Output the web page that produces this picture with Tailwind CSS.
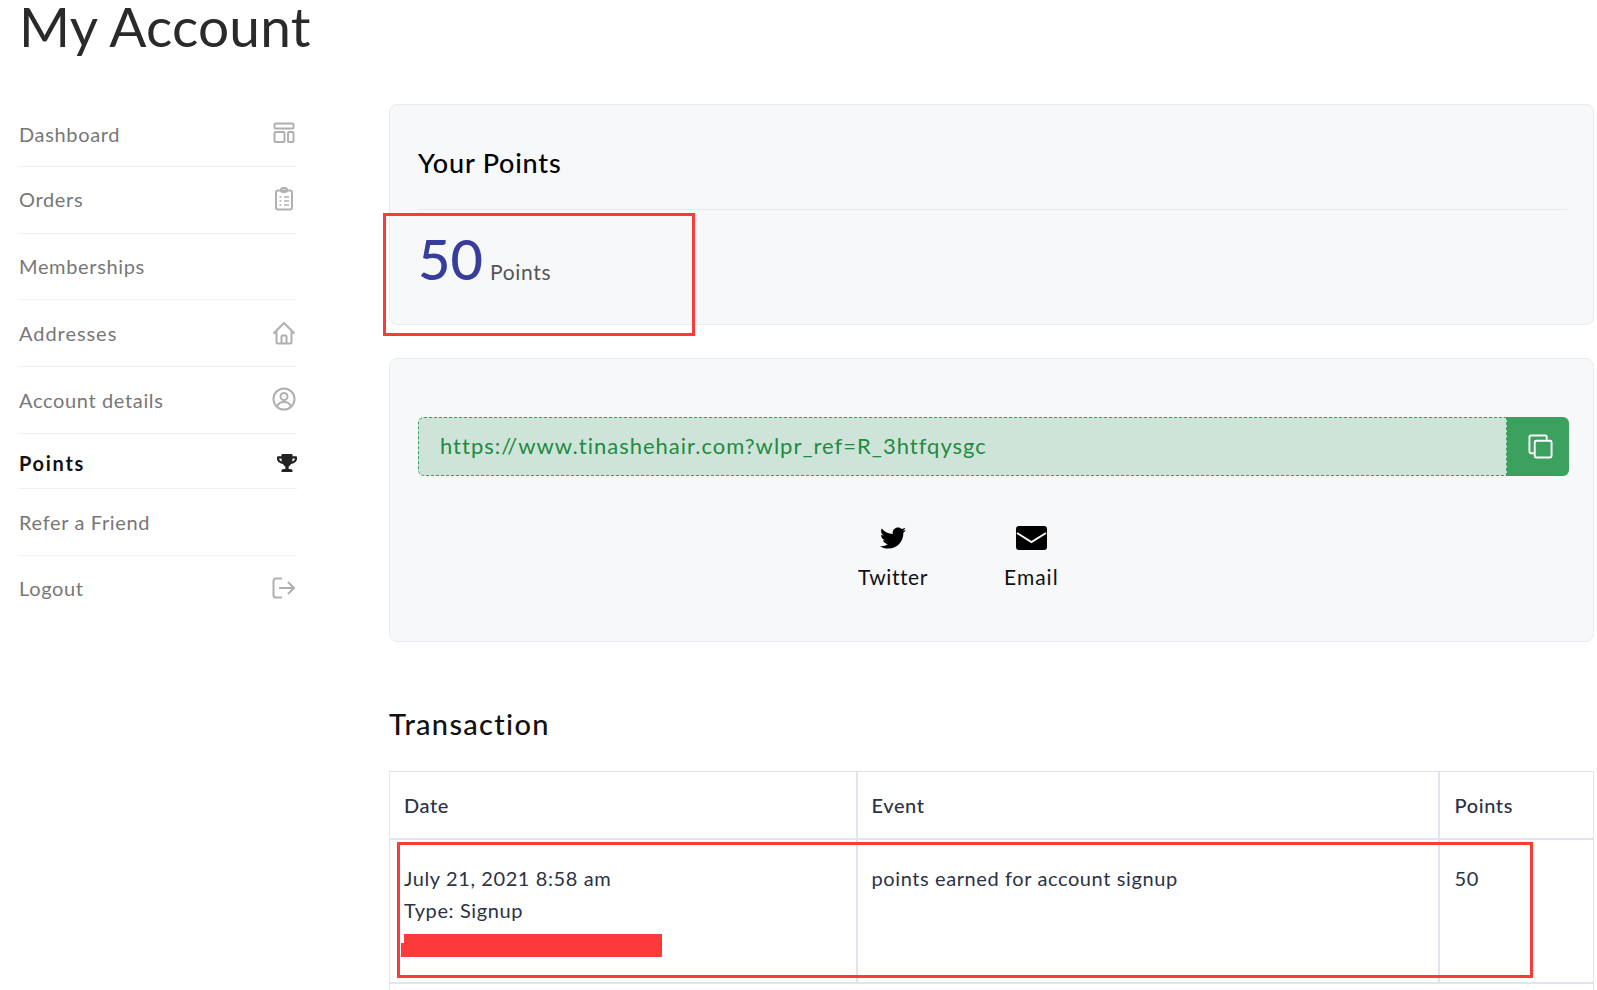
<!DOCTYPE html>
<html lang="en">
<head>
    <meta charset="UTF-8">
    <title>My Account</title>
    <script src="https://cdn.jsdelivr.net/npm/@tailwindcss/browser@4"></script>
</head>
<body class="relative h-[990px] overflow-hidden bg-white font-['Lato','Liberation_Sans',sans-serif] text-[#212121]">
    <h1 class="h-[57px] pl-[19px] text-[55px] leading-[52px] font-normal tracking-[0.2px] text-[#2a2a2a]">My Account</h1>

    <div class="flex pt-[47px] pl-[19px]">
        <!-- sidebar -->
        <nav class="w-[278px] text-[20px] tracking-[0.65px] text-[#777]">
            <a class="flex h-[63px] items-center justify-between border-b border-[#eef0f4] pb-[3px]">
                <span>Dashboard</span>
                <svg class="mr-[2px] mb-[2px] h-[22px] w-[22px]" viewBox="0 0 22 22" fill="none" stroke="#b0b0b0" stroke-width="2"><rect x="1.500" y="1.500" width="19" height="5" rx="1"/><rect x="1.500" y="10" width="10" height="10" rx="1"/><rect x="15" y="10" width="5.500" height="10" rx="1"/></svg>
            </a>
            <a class="flex h-[67px] items-center justify-between border-b border-[#eef0f4] pb-[2px]">
                <span>Orders</span>
                <svg class="mr-[3px] h-[24px] w-[20px]" viewBox="0 0 20 24" fill="none" stroke="#b0b0b0" stroke-width="2"><rect x="2" y="3.500" width="16" height="19" rx="2"/><rect x="7" y="1" width="6" height="4" rx="2"/><path d="M5.500 10h2M10 10h5M5.500 14h2M10 14h5M5.500 18h2M10 18h5" stroke-width="1.500"/></svg>
            </a>
            <a class="flex h-[66px] items-center border-b border-[#eef0f4] pb-[2px]">Memberships</a>
            <a class="flex h-[67px] items-center justify-between border-b border-[#eef0f4]">
                <span class="tracking-[0.95px]">Addresses</span>
                <svg class="mr-[1px] h-[24px] w-[24px]" viewBox="0 0 24 24" fill="none" stroke="#b0b0b0" stroke-width="2"><path d="M1.500 12.500 12 2l10.500 10.500"/><path d="M4.500 10v11.500a1 1 0 0 0 1 1h13a1 1 0 0 0 1-1V10"/><path d="M9.500 22.500v-7a1 1 0 0 1 1-1h3a1 1 0 0 1 1 1v7"/></svg>
            </a>
            <a class="flex h-[67px] items-center justify-between border-b border-[#eef0f4]">
                <span>Account details</span>
                <svg class="mr-[1px] mb-[3px] h-[24px] w-[24px]" viewBox="0 0 24 24" fill="none" stroke="#b0b0b0" stroke-width="2"><circle cx="12" cy="12" r="10.500"/><circle cx="12" cy="9.500" r="3.500"/><path d="M5 19c1.500-3 4-4 7-4s5.500 1 7 4"/></svg>
            </a>
            <a class="flex h-[55px] items-center justify-between border-b border-[#eef0f4] pt-[4px] font-bold tracking-[1.7px] text-[#111]">
                <span>Points</span>
                <svg class="h-[18px] w-[20px]" viewBox="0 0 576 512" fill="#222"><path d="M552 64H448V24c0-13.300-10.700-24-24-24H152c-13.300 0-24 10.700-24 24v40H24C10.700 64 0 74.700 0 88v56c0 35.700 22.500 72.400 61.900 100.700 31.500 22.700 69.800 37.100 110 41.700C203.300 338.500 240 360 240 360v72h-48c-35.300 0-64 20.700-64 56v12c0 6.600 5.400 12 12 12h296c6.600 0 12-5.400 12-12v-12c0-35.300-28.700-56-64-56h-48v-72s36.700-21.500 68.100-73.600c40.300-4.600 78.600-19 110-41.700 39.300-28.300 61.900-65 61.900-100.700V88c0-13.300-10.700-24-24-24zM99.300 192.800C74.900 175.200 64 155.600 64 144v-16h64.200c1 32.600 5.800 61.200 12.800 86.200-15.100-5.200-29.200-12.400-41.700-21.400zM512 144c0 16.100-17.700 36.100-35.300 48.800-12.500 9-26.700 16.200-41.800 21.400 7-25 11.800-53.600 12.800-86.200H512v16z"/></svg>
            </a>
            <a class="flex h-[67px] items-center border-b border-[#eef0f4]">Refer a Friend</a>
            <a class="flex h-[66px] items-center justify-between pb-[2px]">
                <span>Logout</span>
                <svg class="mr-[2px] h-[22px] w-[23px]" viewBox="0 0 23 22" fill="none" stroke="#b0b0b0" stroke-width="2"><path d="M10 1.500H4a2.500 2.500 0 0 0-2.500 2.500v14A2.500 2.500 0 0 0 4 20.500h6"/><path d="M7 11h15M16 5l6 6-6 6"/></svg>
            </a>
        </nav>

        <main class="ml-[92px] w-[1205px]">
            <section class="h-[221px] rounded-lg border border-[#e8eaf3] bg-[#f7f8fa] pr-[26px] pl-[28px] pt-[40px]">
                <h2 class="border-b border-[#e6e8f2] pb-[28px] text-[27px] leading-[36px] font-medium tracking-[0.8px] text-black">Your Points</h2>
                <div class="flex items-baseline gap-[7px] pt-[14px]">
                    <span class="text-[56px] leading-[70px] font-medium text-[#363d9b]">50</span>
                    <span class="text-[21px] tracking-[0.7px] text-[#555]">Points</span>
                </div>
            </section>

            <section class="mt-[33px] h-[284px] rounded-lg border border-[#e8eaf3] bg-[#f7f8fa] px-[28px] pt-[58px]">
                <div class="flex h-[59px] w-[1151px]">
                    <div class="flex flex-1 items-center rounded-l-md border border-dashed border-[#3ea05f] bg-[#cfe4d8] pb-[2px] pl-[21px] text-[22px] tracking-[1px] text-[#1e8a42]">https://www.tinashehair.com?wlpr_ref=R_3htfqysgc</div>
                    <button class="flex w-[62px] items-center justify-center rounded-r-md bg-[#3ca05f] pl-[4px]">
                        <svg class="h-[25px] w-[25px]" viewBox="0 0 26 26" fill="none" stroke="#fff" stroke-width="2"><path d="M6 20H3a1.500 1.500 0 0 1-1.500-1.500V3A1.500 1.500 0 0 1 3 1.500h15A1.500 1.500 0 0 1 19.500 3v3"/><rect x="7" y="7" width="17.500" height="17.500" rx="1.500"/></svg>
                    </button>
                </div>
                <div class="flex gap-[76px] pl-[440px] pt-[49px] text-[21px] leading-[28px] tracking-[0.6px] text-[#111]">
                    <a class="flex flex-col items-center">
                        <svg class="mb-[12px] h-[26px] w-[26px]" viewBox="0 0 512 512" fill="#000"><path d="M459.370 151.716c.325 4.548.325 9.097.325 13.645 0 138.720-105.583 298.558-298.558 298.558-59.452 0-114.680-17.219-161.137-47.106 8.447.974 16.568 1.299 25.340 1.299 49.055 0 94.213-16.568 130.274-44.832-46.132-.975-84.792-31.188-98.112-72.772 6.498.974 12.995 1.624 19.818 1.624 9.421 0 18.843-1.300 27.614-3.573-48.081-9.747-84.143-51.980-84.143-102.985v-1.299c13.969 7.797 30.214 12.670 47.431 13.319-28.264-18.843-46.781-51.005-46.781-87.391 0-19.492 5.197-37.360 14.294-52.954 51.655 63.675 129.300 105.258 216.365 109.807-1.624-7.797-2.599-15.918-2.599-24.040 0-57.828 46.782-104.934 104.934-104.934 30.213 0 57.502 12.670 76.670 33.137 23.715-4.548 46.456-13.320 66.599-25.340-7.798 24.366-24.366 44.833-46.132 57.827 21.117-2.273 41.584-8.122 60.426-16.243-14.292 20.791-32.161 39.308-52.628 54.253z"/></svg>
                        <span>Twitter</span>
                    </a>
                    <a class="flex flex-col items-center tracking-[1px]">
                        <svg class="mb-[12px] h-[26px] w-[31px]" viewBox="0 0 31 26" fill="#000"><rect x="0" y="1" width="31" height="24" rx="3"/><path d="M1 8 15.500 17 30 8" fill="none" stroke="#f7f8fa" stroke-width="2"/></svg>
                        <span>Email</span>
                    </a>
                </div>
            </section>

            <h2 class="pt-[64px] text-[29px] leading-[36px] font-medium tracking-[1.3px] text-[#111]">Transaction</h2>

            <table class="mt-[29px] w-[1205px] table-fixed border-collapse text-[20px] tracking-[0.6px] text-[#2b3245]">
                <thead>
                    <tr class="h-[67px]">
                        <th class="w-[467px] border-t border-r-2 border-b-2 border-l border-[#e2e4f0] pl-[14px] text-left font-medium">Date</th>
                        <th class="w-[582px] border-t border-r-2 border-b-2 border-[#e2e4f0] pl-[14px] text-left font-medium">Event</th>
                        <th class="border-t border-r border-b-2 border-[#e2e4f0] pl-[15px] text-left font-medium">Points</th>
                    </tr>
                </thead>
                <tbody>
                    <tr class="h-[144px] align-top">
                        <td class="border-r-2 border-b-2 border-l border-[#e2e4f0] pl-[14px] pt-[22px] leading-[32px]">July 21, 2021 8:58 am<br>Type: Signup</td>
                        <td class="border-r-2 border-b-2 border-[#e2e4f0] pl-[14px] pt-[22px] leading-[32px]">points earned for account signup</td>
                        <td class="border-r border-b-2 border-[#e2e4f0] pl-[15px] pt-[22px] leading-[32px]">50</td>
                    </tr>
                    <tr class="h-[20px]">
                        <td colspan="3" class="border-r border-l border-[#e2e4f0]"></td>
                    </tr>
                </tbody>
            </table>
        </main>
    </div>

    <!-- annotations drawn over the screenshot -->
    <div class="absolute left-[383px] top-[213px] h-[123px] w-[312px] border-[3px] border-[#fd3a3a]"></div>
    <div class="absolute left-[397px] top-[842px] h-[136px] w-[1136px] border-[3px] border-[#fd3a3a]"></div>
    <div class="absolute left-[404px] top-[934px] h-[23px] w-[258px] bg-[#fd3a3a]"></div>
    <div class="absolute left-[401px] top-[943px] h-[14px] w-[4px] bg-[#fd3a3a]"></div>
</body>
</html>
